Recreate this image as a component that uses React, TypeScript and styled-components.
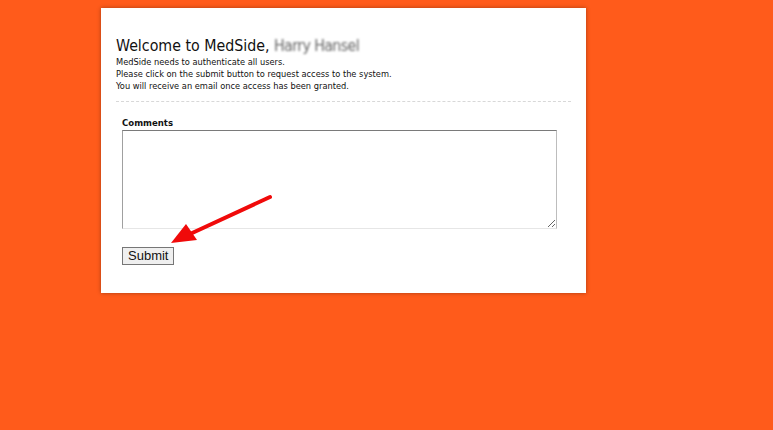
import React from "react";
import styled, { createGlobalStyle } from "styled-components";

const Global = createGlobalStyle`
  html, body { margin: 0; padding: 0; background: #ff5b1b; }
  body { font-family: "Liberation Sans", Arial, sans-serif; }
`;

const Page = styled.div`
  position: relative;
  width: 773px;
  height: 430px;
  padding-top: 8px;
  box-sizing: border-box;
`;

const Card = styled.div`
  margin-left: 101px;
  width: 485px;
  height: 285px;
  background: #ffffff;
  box-shadow: 0 0 4px rgba(0, 0, 0, 0.35);
  box-sizing: border-box;
  padding: 28px 15px 0 15px;
`;

const Heading = styled.h1`
  margin: 0;
  font-family: "DejaVu Sans Condensed", "DejaVu Sans", sans-serif;
  font-size: 15.8px;
  font-weight: normal;
  color: #111;
  line-height: 20px;
`;

const Blurred = styled.span`
  color: #666;
  filter: blur(1px);
  letter-spacing: -0.6px;
`;

const Intro = styled.p`
  margin: 0;
  font-family: "DejaVu Sans Condensed", "DejaVu Sans", sans-serif;
  font-size: 9.2px;
  line-height: 12px;
  color: #111;
`;

const Divider = styled.div`
  margin-top: 9px;
  border-top: 1px dashed #d8d8d8;
`;

const Form = styled.div`
  padding: 15px 0 0 6px;
  display: flex;
  flex-direction: column;
  align-items: flex-start;
`;

const Label = styled.label`
  font-family: "DejaVu Sans Condensed", "DejaVu Sans", sans-serif;
  font-size: 9.5px;
  font-weight: bold;
  color: #111;
  line-height: 12px;
  margin-bottom: 1px;
`;

const TextArea = styled.textarea`
  width: 435px;
  height: 99px;
  box-sizing: border-box;
  border: 1px solid #a0a0a0;
  border-top-color: #7a7a7a;
  border-bottom-color: #e6e6e6;
  border-right-color: #bdbdbd;
  margin: 0;
  padding: 2px;
  resize: vertical;
  font-family: "Liberation Sans", Arial, sans-serif;
`;

const Button = styled.button`
  margin-top: 18px;
  height: 18px;
  padding: 0 5px;
  font-family: "Liberation Sans", Arial, sans-serif;
  font-size: 13px;
  line-height: 16px;
  color: #111;
  background: #efefef;
  border: 1px solid #767676;
  border-radius: 0;
`;

const Arrow = styled.svg`
  position: absolute;
  left: 0;
  top: 0;
  pointer-events: none;
`;

export default function App() {
  return (
    <>
      <Global />
      <Page>
        <Card>
          <Heading>
            Welcome to MedSide, <Blurred>Harry Hansel</Blurred>
          </Heading>
          <Intro>MedSide needs to authenticate all users.</Intro>
          <Intro>Please click on the submit button to request access to the system.</Intro>
          <Intro>You will receive an email once access has been granted.</Intro>
          <Divider />
          <Form>
            <Label>Comments</Label>
            <TextArea />
            <Button>Submit</Button>
          </Form>
        </Card>
        <Arrow width="773" height="430" viewBox="0 0 773 430">
          <line x1="270" y1="197" x2="190" y2="234" stroke="#f00a0a" strokeWidth="4" strokeLinecap="round" />
          <polygon points="171,243 186,224 197,240" fill="#f00a0a" />
        </Arrow>
      </Page>
    </>
  );
}
